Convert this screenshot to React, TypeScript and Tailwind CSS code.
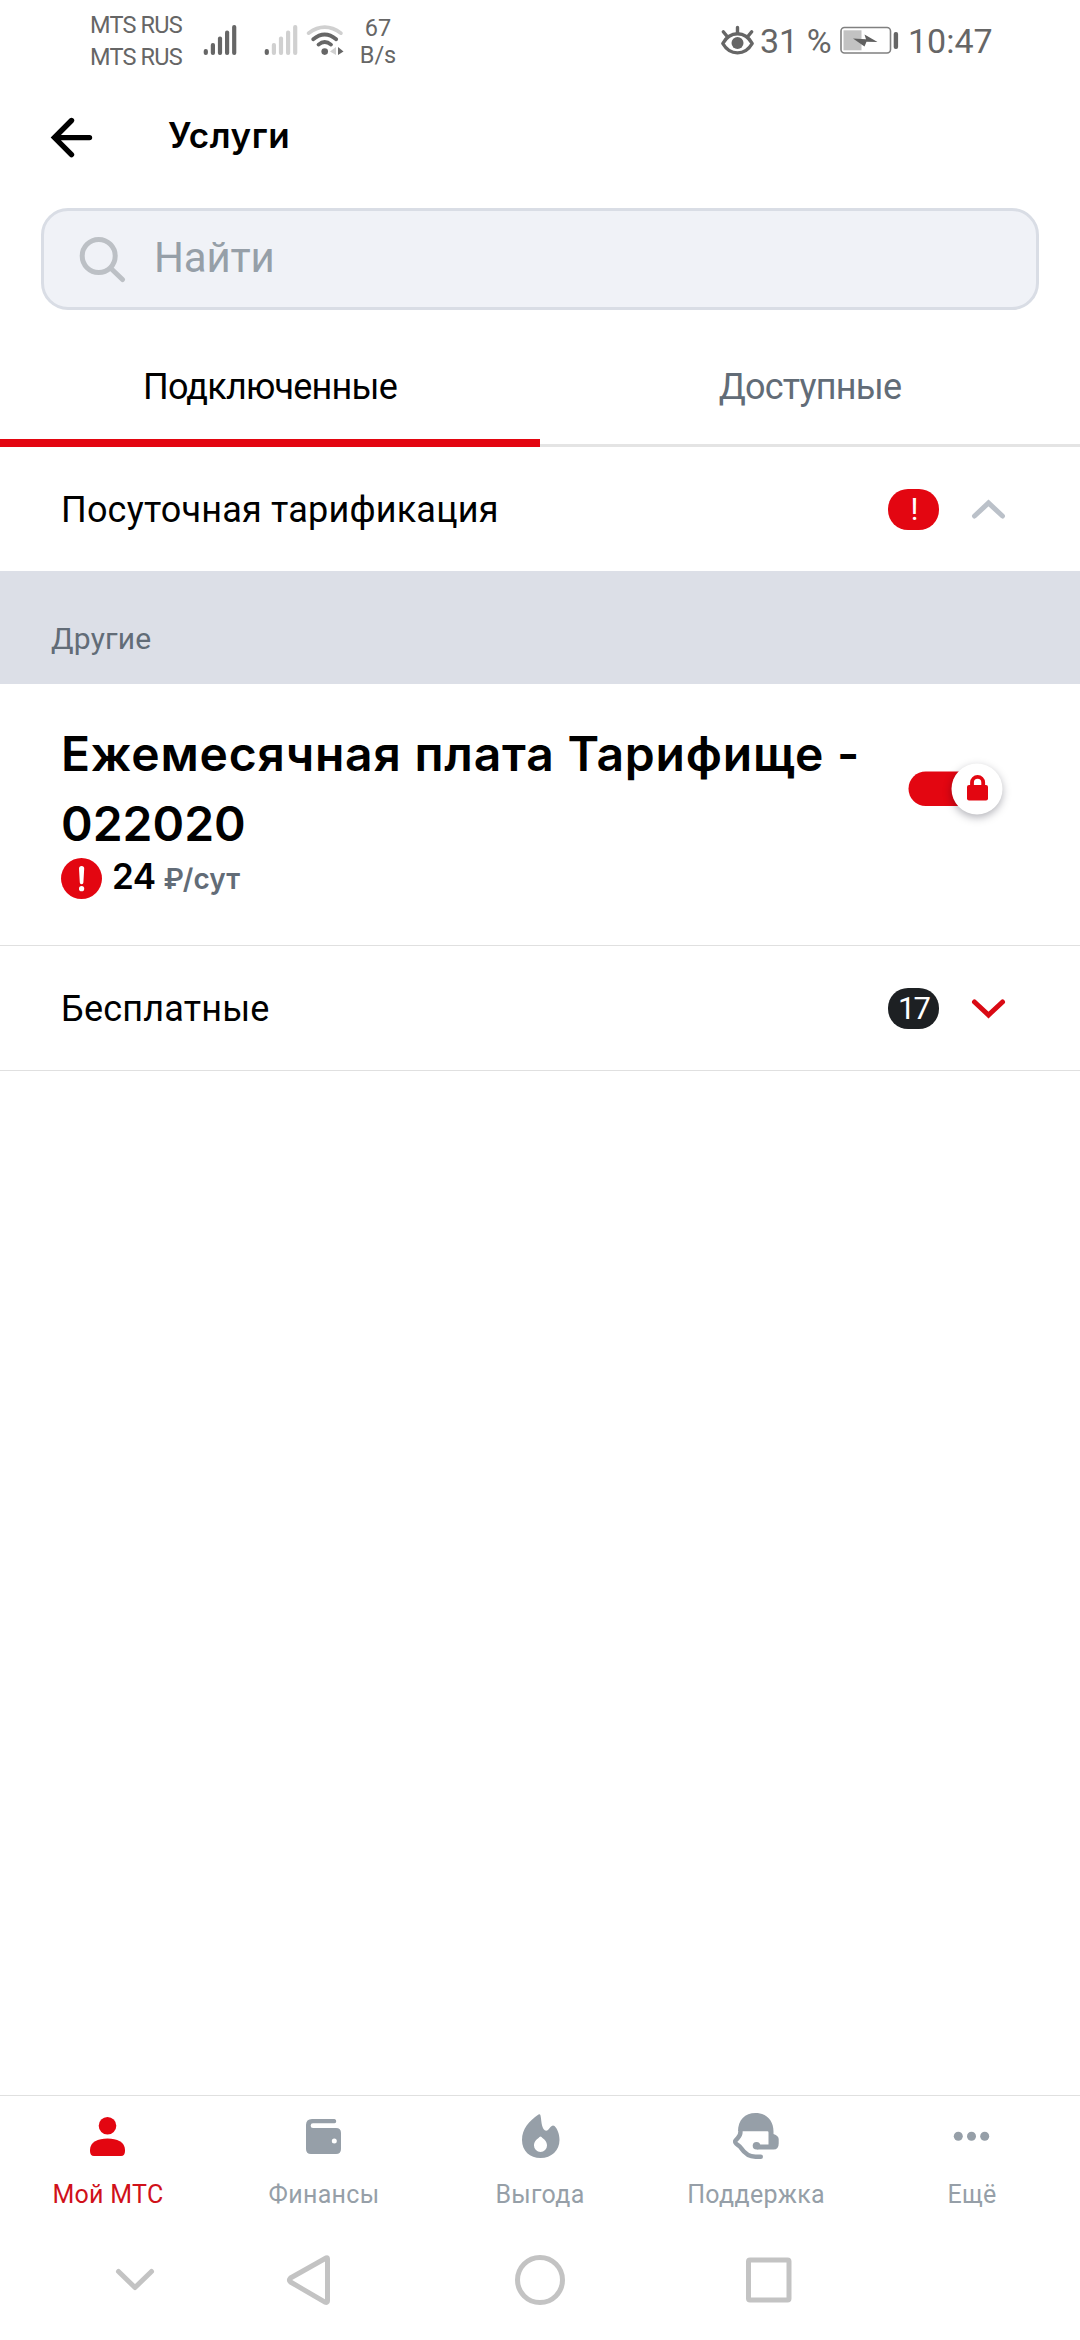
const tabs = [
    { id: 1, name: 'Мой МТС', icon: <PersonIcon />, active: true },
    { id: 2, name: 'Финансы', icon: <WalletIcon />, active: false },
    { id: 3, name: 'Выгода', icon: <FlameIcon />, active: false },
    { id: 4, name: 'Поддержка', icon: <SupportIcon />, active: false },
    { id: 5, name: 'Ещё', icon: <MoreIcon />, active: false },
]

function Signal({ x, level }: { x: number; level: number }) {
    const tops = [49, 43, 36.5, 30.5, 25]
    return (
        <g>
            {tops.map((top, i) => (
                <rect key={top} x={x + i * 7.1 - 2} y={top} width="4.2" height={55 - top} rx="2" fill={i < level ? '#666' : '#d0d0d0'} />
            ))}
        </g>
    )
}

function NetworkIcons() {
    return (
        <svg className="ml-5 h-[90px] w-[146px] shrink-0" viewBox="200 0 146 90" fill="none" strokeLinecap="round">
            <Signal x={205.7} level={5} />
            <Signal x={266.7} level={1} />
            <path d="M308.5 33.2Q324.7 21.2 341 33.2" stroke="#d0d0d0" strokeWidth="3.6" />
            <path d="M313.2 39.3Q324.7 29.8 336.2 39.3" stroke="#666" strokeWidth="3.8" />
            <path d="M318.5 44.6Q324.7 39.4 331 44.6" stroke="#666" strokeWidth="3.8" />
            <circle cx="324.7" cy="51.6" r="3.3" fill="#666" />
            <path d="M330 51.5L336 47V55Z" fill="#d0d0d0" />
            <path d="M338 47L343.5 51.5L338 55Z" fill="#666" />
        </svg>
    )
}

function StatusBar() {
    return (
        <div className="flex h-[90px] shrink-0 items-start font-[Roboto,sans-serif] text-[#666]">
            <div className="ml-[90px] w-[90px] pt-[9px] text-[23.5px] leading-[32px] tracking-[-0.8px] whitespace-nowrap">
                <div>MTS RUS</div>
                <div>MTS RUS</div>
            </div>
            <NetworkIcons />
            <div className="w-[64px] pt-[15px] text-center text-[23.5px] leading-[27px]">
                <div>67</div>
                <div>B/s</div>
            </div>
            <svg className="ml-[310px] h-[90px] w-[36px] shrink-0" viewBox="720 0 36 90" fill="none" stroke="#666" strokeLinecap="round">
                <path d="M722.8 43.5C730 30.5 745 30.5 752.2 43.5C745 56 730 56 722.8 43.5Z" strokeWidth="3.4" strokeLinejoin="round" />
                <circle cx="737.5" cy="43" r="6" fill="#666" stroke="none" />
                <path d="M737.5 27.5V33M723.3 31.7L727 36.3M751.7 31.7L748 36.3" strokeWidth="3.4" />
            </svg>
            <div className="ml-1 w-[72px] pt-[22px] text-[34px] leading-[38px] whitespace-nowrap">31 %</div>
            <svg className="ml-1.5 h-[90px] w-[62px] shrink-0" viewBox="838 0 62 90">
                <rect x="841" y="27.5" width="49.5" height="25.5" rx="3.5" fill="none" stroke="#808080" strokeWidth="1.6" />
                <rect x="843.5" y="30.3" width="18" height="20" fill="#c2c2c2" />
                <path d="M853 38.5L866 39.3L864.5 34.5L877.5 42L866.5 41.8L864.5 46.5Z" fill="#606060" />
                <rect x="893.7" y="32" width="4.4" height="17" rx="2" fill="#666" />
            </svg>
            <div className="ml-2 pt-[22px] text-[34px] leading-[38px] whitespace-nowrap">10:47</div>
        </div>
    )
}

function Header() {
    return (
        <header className="flex h-[96px] shrink-0 items-center pl-12">
            <svg className="h-12 w-12" viewBox="48 114 48 48" fill="none" stroke="#000" strokeWidth="5.4" strokeLinecap="round">
                <path d="M71.5 120.5L54.5 137.6L71.5 154.7M55 137.6H89.5" />
            </svg>
            <h1 className="mb-1.5 ml-[72px] font-[Inter,sans-serif] text-[35px] leading-[44px] font-semibold tracking-[0.6px]">Услуги</h1>
        </header>
    )
}

function Badge({ text, dark }: { text: string; dark?: boolean }) {
    return (
        <span className={`flex h-[41px] w-[51px] items-center justify-center rounded-[20px] text-[31px] leading-none tracking-[-1.8px] text-white ${dark ? 'bg-[#1d2023]' : 'bg-[#e30611]'}`}>
            {text}
        </span>
    )
}

function SectionRow({ name, badge, open }: { name: string; badge: string; open?: boolean }) {
    return (
        <div className="flex h-[124px] shrink-0 items-center pr-[69px] pl-[61px]">
            <span className="flex-1 pt-0.5 text-[36px] leading-[44px] tracking-[0.2px]">{name}</span>
            <Badge text={badge} dark={!open} />
            <svg className="ml-7 h-11 w-11" viewBox="0 0 44 44" fill="none" stroke={open ? '#bbc1c9' : '#d90a14'} strokeWidth="5" strokeLinecap="round">
                <path d={open ? 'M7.5 29L21.5 16L35.5 29' : 'M7.5 16L21.5 29L35.5 16'} />
            </svg>
        </div>
    )
}

function LockedSwitch() {
    return (
        <svg className="h-20 w-[120px] shrink-0" viewBox="900 750 120 80">
            <rect x="908.5" y="771.5" width="80" height="34.5" rx="17.2" fill="#e30611" />
            <circle className="drop-shadow-[0_3px_4px_rgba(0,0,20,0.3)]" cx="977" cy="789" r="25.5" fill="#fff" />
            <rect x="967" y="785" width="21" height="15.5" rx="2" fill="#e30611" />
            <path d="M972 786V782.5A5.6 5.6 0 0 1 983.2 782.5V786" fill="none" stroke="#e30611" strokeWidth="3.8" />
        </svg>
    )
}

function PersonIcon() {
    return (
        <svg className="h-12 w-12" viewBox="84 2112 48 48" fill="currentColor">
            <circle cx="107.5" cy="2125.7" r="8.8" />
            <path d="M90 2150C90 2142 98 2138.5 107.5 2138.5S125 2142 125 2150V2151Q125 2156 121 2156H94Q90 2156 90 2151Z" />
        </svg>
    )
}

function WalletIcon() {
    return (
        <svg className="h-12 w-12" viewBox="300 2112 48 48" fill="currentColor">
            <path fillRule="evenodd" d="M312 2119H334.5A2.2 2.2 0 0 1 334.5 2123.3H313A2.2 2.2 0 0 0 313 2128H336Q341 2128 341 2133V2149Q341 2154 336 2154H311Q306 2154 306 2149V2125Q306 2119 312 2119ZM334.3 2138.6A2.5 2.5 0 1 0 334.3 2143.6A2.5 2.5 0 1 0 334.3 2138.6Z" />
        </svg>
    )
}

function FlameIcon() {
    return (
        <svg className="h-12 w-12" viewBox="516 2112 48 48" fill="currentColor">
            <path fillRule="evenodd" d="M538.5 2114.5C529 2121 522 2129 522 2140C522 2151 530 2158 540.5 2158C551.5 2158 559.5 2150.5 559.5 2140C559.5 2134 557.5 2129 554.5 2126Q552.5 2124.5 550.5 2127L548 2130Q545.5 2132 543.5 2129C541 2124 541.5 2120 540.5 2115.5Q540 2113.5 538.5 2114.5ZM539.5 2137Q540.5 2136 541.5 2137C544 2139.5 547 2141 547 2145.5A6.5 6.5 0 0 1 534 2145.5C534 2141 537 2139.5 539.5 2137Z" />
        </svg>
    )
}

function SupportIcon() {
    return (
        <svg className="h-12 w-12" viewBox="732 2112 48 48" fill="none" stroke="currentColor" strokeLinecap="round" strokeLinejoin="round">
            <path d="M738 2131.5C738 2120 745 2113 755.5 2113S773.5 2120 773.5 2131.5V2134C777 2135 778.7 2137 778.7 2139V2143.5Q778.7 2149.5 773.5 2149.5H757V2144.5H768.5V2132.5Q768.5 2131.3 767.5 2131.3H738Z" fill="currentColor" stroke="none" />
            <circle cx="756.5" cy="2145.7" r="3.8" fill="currentColor" stroke="none" />
            <path d="M740.5 2131.5C740.5 2137 738 2137 735.2 2141C734.5 2144.5 739 2144.5 741 2148C745 2154 749.5 2156.7 755.5 2156.7H760.8" strokeWidth="4.4" />
        </svg>
    )
}

function MoreIcon() {
    return (
        <svg className="h-12 w-12" viewBox="948 2112 48 48" fill="currentColor">
            <circle cx="958.3" cy="2136.3" r="4.5" />
            <circle cx="971.5" cy="2136.3" r="4.5" />
            <circle cx="984.7" cy="2136.3" r="4.5" />
        </svg>
    )
}

function SystemNav() {
    return (
        <svg className="h-[120px] w-full shrink-0" viewBox="0 2220 1080 120" fill="none" stroke="#c3c3c3" strokeWidth="5" strokeLinecap="round" strokeLinejoin="round">
            <path d="M118.5 2271.5L135 2287.5L151.5 2271.5" />
            <path d="M326.5 2257.8L290.5 2278Q288.5 2280 290.5 2282L325 2302.2Q327.5 2303 327.5 2301V2259Q327.5 2257.5 326.5 2257.8Z" />
            <circle cx="540" cy="2280" r="22.5" />
            <rect x="748.5" y="2260" width="40.5" height="40" rx="1.5" />
        </svg>
    )
}

export default function App() {
    return (
        <div className="flex h-[2340px] w-[1080px] flex-col bg-white font-[Roboto,sans-serif] text-black">
            <StatusBar />
            <Header />
            <div className="mx-[41px] mt-[22px] flex h-[102px] shrink-0 items-center rounded-[27px] border-3 border-[#d9dde5] bg-[#f0f2f7] pl-[34px]">
                <svg className="h-12 w-12" viewBox="78 235 48 48" fill="none" stroke="#bcc0c5" strokeWidth="5" strokeLinecap="round">
                    <circle cx="98.7" cy="256" r="16.5" />
                    <path d="M111 268.5L122.5 279.5" />
                </svg>
                <span className="ml-7 pb-0.5 text-[42px] leading-[50px] tracking-[-0.2px] text-[#969fa8]">Найти</span>
            </div>
            <div className="mt-[39px] flex h-[98px] shrink-0 text-[36px] tracking-[-0.8px]">
                <div className="flex w-1/2 justify-center border-b-8 border-[#e30611] pt-[11px]">Подключенные</div>
                <div className="flex w-1/2 justify-center border-b-3 border-[#e4e4e4] pt-[11px] text-[#626c77]">Доступные</div>
            </div>
            <SectionRow name="Посуточная тарификация" badge="!" open />
            <div className="flex h-[113px] shrink-0 items-end bg-[#dcdfe7] pb-[25px] pl-[51px] text-[30px] leading-[40px] tracking-[0.2px] text-[#626c77]">
                Другие
            </div>
            <div className="flex h-[262px] shrink-0 border-b border-[#e0e0e0] pl-[61px]">
                <div className="w-[839px] pt-[35px]">
                    <h2 className="font-[Inter,sans-serif] text-[48px] leading-[70px] font-semibold tracking-[0.8px] whitespace-nowrap">
                        Ежемесячная плата Тарифище -<br />
                        <span className="tracking-normal">022020</span>
                    </h2>
                    <div className="-mt-[3px] flex items-baseline font-[Inter,sans-serif] font-semibold">
                        <svg className="h-[41px] w-[41px] self-center" viewBox="0 0 41 41">
                            <circle cx="20.5" cy="20.5" r="20.5" fill="#e30611" />
                            <path d="M18 10.5A2.6 2.6 0 0 1 23.2 10.5L22.4 24.5A1.8 1.8 0 0 1 18.8 24.5Z" fill="#fff" />
                            <circle cx="20.6" cy="30.7" r="2.6" fill="#fff" />
                        </svg>
                        <span className="ml-[10px] text-[35px] leading-[41px] tracking-[-0.5px]">24</span>
                        <span className="ml-[8px] text-[28px] leading-[41px] text-[#626c77]">₽/сут</span>
                    </div>
                </div>
                <div className="pt-[66px]">
                    <LockedSwitch />
                </div>
            </div>
            <div className="border-b border-[#e0e0e0]">
                <SectionRow name="Бесплатные" badge="17" />
            </div>
            <div className="flex-1" />
            <nav className="grid h-[125px] shrink-0 grid-cols-5 border-t border-[#e0e0e0]">
                {tabs.map((tab) => (
                    <div key={tab.id} className={`flex flex-col items-center pt-4 ${tab.active ? 'text-[#e30611]' : 'text-[#969fa8]'}`}>
                        {tab.icon}
                        <span className={`mt-[19px] text-[25px] leading-[32px] tracking-[0.3px] ${tab.active ? 'text-[#d0111a]' : ''}`}>{tab.name}</span>
                    </div>
                ))}
            </nav>
            <SystemNav />
        </div>
    )
}
